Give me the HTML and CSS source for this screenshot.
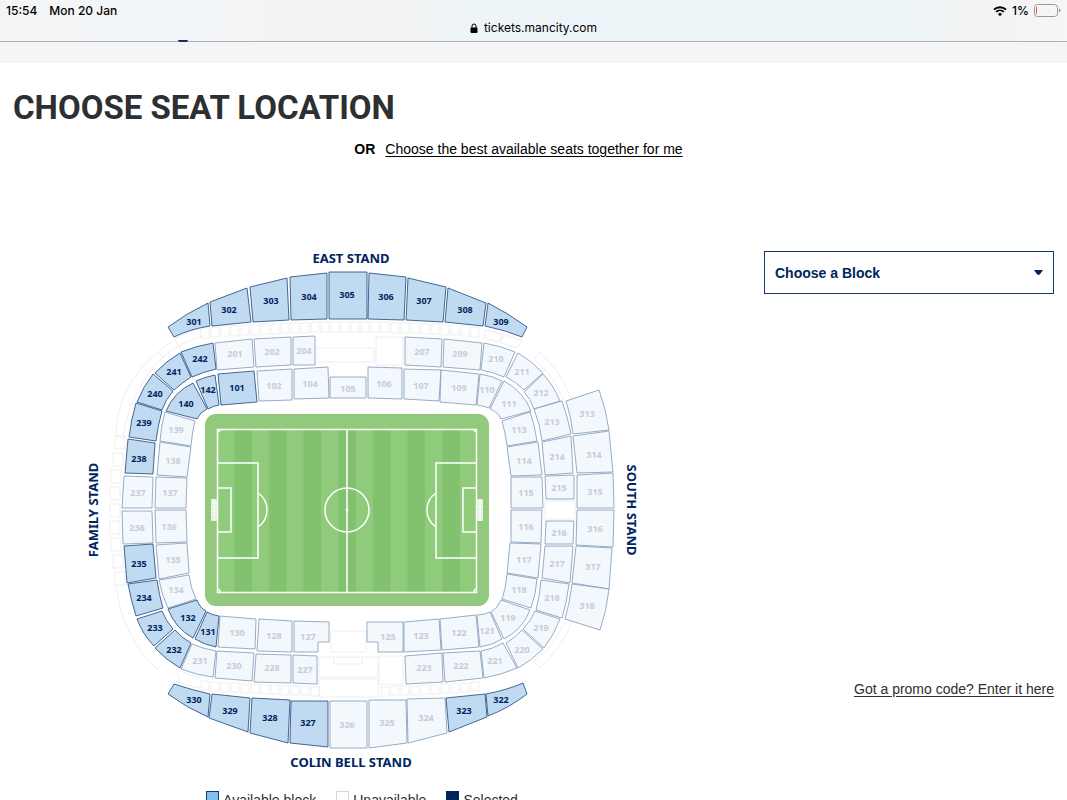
FILE: index.html
```html
<!DOCTYPE html>
<html lang="en">
<head>
    <meta charset="UTF-8">
    <meta name="viewport" content="width=device-width, initial-scale=1.0">
    <title>Choose Seat Location</title>
    <link rel="stylesheet" href="styles.css">
</head>
<body>
    <header class="browser-bar">
        <div class="status-row">
            <div class="clock"><span>15:54</span><span>Mon 20 Jan</span></div>
            <div class="device">
                <svg class="wifi" viewBox="0 0 15 12" aria-hidden="true">
                    <path d="M1 4.6a9.4 9.4 0 0 1 13 0M3.3 7a6.2 6.2 0 0 1 8.4 0"/>
                    <path class="wifi-dot" d="M7.5 11.6 5.2 9.2a3.3 3.3 0 0 1 4.6 0z"/>
                </svg>
                <span>1%</span>
                <svg class="battery" viewBox="0 0 27 13" aria-hidden="true">
                    <rect x="0.5" y="0.5" width="23" height="12" rx="3"/>
                    <path class="battery-tip" d="M25 4.5q1.5.5 1.5 2t-1.5 2z"/>
                    <path class="battery-level" d="M2.5 3v7"/>
                </svg>
            </div>
        </div>
        <div class="address">
            <svg class="lock" viewBox="0 0 8 10" aria-hidden="true">
                <rect x="0.5" y="4.5" width="7" height="5.5" rx="1"/>
                <path d="M2 5V3a2 2 0 0 1 4 0v2"/>
            </svg>
            <span>tickets.mancity.com</span>
        </div>
    </header>
    <div class="site-strip"></div>

    <main>
        <h1>CHOOSE SEAT LOCATION</h1>
        <p class="best-seats"><strong>OR</strong><a href="#best">Choose the best available seats together for me</a></p>

        <div class="picker">
            <section class="map-column">
                <svg class="stadium" viewBox="13 245 704 537" role="group" aria-label="Stadium map">
                    <text class="stand" x="351" y="263">EAST STAND</text>
                    <text class="stand" x="351" y="767">COLIN BELL STAND</text>
                    <text class="stand" transform="translate(98 510) rotate(-90)">FAMILY STAND</text>
                    <text class="stand" transform="translate(627 510) rotate(90)">SOUTH STAND</text>

                    <g id="concourse" class="concourse">
                        <path d="M200 328 Q178 334 158 352 L163 357 Q181 342 203 336 M176 341L181 350"/>
                        <path d="M158 352 Q116 387 116 436 L123 438 Q128 393 163 357"/>
                        <path d="M116 585 Q122 637 157 669 L162 664 M176 671L180 681 M176 681Q186 686 200 688M180 671L200 678"/>
                        <path d="M485 330L502 334 499 342 484 338zM504 334L522 341 517 348 501 343z"/>
                        <path d="M539 352 Q560 370 571 398M539 352L534 359Q553 374 564 401"/>
                        <path d="M572 621Q564 646 539 668L534 661Q555 645 565 621"/>
                        <path d="M317 348H374V362H317M376 337H403V365H376z"/>
                        <path d="M319 657H378V677H319zM319 679H378V697H319zM334 657V664H362V657M379 656H403V684H379zM331 631H366V652H331z"/>
                        <path d="M545 501H575V519H545z"/>
                    </g>

                    <rect class="grass-edge" x="205" y="414" width="284" height="192" rx="11"/>
                    <rect class="grass" x="217" y="429" width="260" height="163"/>
                    <g id="stripes" class="stripes"></g>
                    <g class="lines">
                        <rect x="217.5" y="429.5" width="259" height="163"/>
                        <path d="M347 429V592M217 463H258V558H217M217 488H231V532H217"/>
                        <path d="M477 463H436V558H477M477 488H463V532H477"/>
                        <path d="M258 493Q267 499 267 510T258 527M436 493Q427 499 427 510T436 527"/>
                        <path d="M217 432Q220 432 220 429M474 429Q474 432 477 432M217 589Q220 589 220 592M474 592Q474 589 477 589"/>
                        <circle cx="347" cy="510" r="22"/>
                        <circle class="spot" cx="347" cy="510" r="1.5"/>
                    </g>
                    <g class="goal">
                        <rect x="211" y="499" width="6" height="22"/>
                        <rect x="477" y="499" width="6" height="22"/>
                        <path d="M211 503H217M211 507H217M211 511H217M211 515H217M214 499V521M477 503H483M477 507H483M477 511H483M477 515H483M480 499V521"/>
                    </g>

                    <g id="blocks"></g>
                </svg>

                <ul class="legend">
                    <li><span class="swatch available"></span>Available block</li>
                    <li><span class="swatch"></span>Unavailable</li>
                    <li><span class="swatch selected"></span>Selected</li>
                </ul>
            </section>

            <aside class="side-column">
                <div class="block-select">
                    <select id="block" aria-label="Choose a Block">
                        <option>Choose a Block</option>
                    </select>
                    <svg class="caret" viewBox="0 0 9 5" aria-hidden="true"><path d="M0 0h9L6 4.2q-1.5 1.2-3 0z"/></svg>
                </div>
                <a class="promo" href="#promo">Got a promo code? Enter it here</a>
            </aside>
        </div>
    </main>

    <script src="script.js"></script>
</body>
</html>
```

FILE: styles.css
```css
* {
    box-sizing: border-box;
}

body {
    margin: 0;
    height: 100vh;
    overflow-x: hidden;
    background: #fff;
    color: #000;
    font-family: "Liberation Sans", Arial, sans-serif;
    font-size: 14px;
    scrollbar-width: none;
}

/* browser bar */
.browser-bar {
    height: 42px;
    padding: 3px 6px 0;
    background: linear-gradient(90deg, #f4f5f6 0%, #f2f6f9 16%, #f3f3f3 28%, #f3f3f3 37%, #edf5f8 46%, #edf5f8 84%, #f2f2f3 91%, #f6f6f6 100%);
    border-bottom: 1px solid #b0b2b4;
    font-family: Inter, sans-serif;
    font-size: 12px;
    line-height: 15px;
}

.status-row,
.clock,
.device,
.address {
    display: flex;
    align-items: center;
}

.status-row {
    justify-content: space-between;
    font-weight: 500;
}

.clock {
    gap: 12px;
}

.device {
    gap: 5px;
}

.wifi {
    width: 14px;
    height: 12px;
    fill: none;
    stroke: #000;
    stroke-width: 2;
}

.wifi-dot {
    fill: #000;
    stroke: none;
}

.battery {
    width: 27px;
    height: 13px;
    fill: none;
    stroke: #98999b;
}

.battery-tip {
    fill: #98999b;
    stroke: none;
}

.battery-level {
    stroke: #f0554f;
}

.address {
    justify-content: center;
    gap: 6px;
    padding-top: 2px;
}

.lock {
    width: 8px;
    height: 10px;
    stroke: #000;
}

.lock rect {
    stroke: none;
}

.lock path {
    fill: none;
}

.site-strip {
    position: relative;
    height: 21px;
    background: #f5f5f8;
}

/* bottom of the club badge, under the bar */
.site-strip::before {
    content: "";
    position: absolute;
    top: -2px;
    left: 178px;
    width: 10px;
    height: 2px;
    border-radius: 0 0 5px 5px;
    background: #1b2c5e;
}

/* page */
main {
    padding: 23px 13px 0;
}

h1 {
    margin: 0;
    color: #2e2f31;
    font-family: Roboto, sans-serif;
    font-size: 33px;
    font-weight: 700;
    line-height: 44px;
}

.best-seats {
    display: flex;
    justify-content: center;
    gap: 10px;
    margin: 11px 30px 88px 0;
    line-height: 16px;
}

a {
    color: #000;
    text-underline-offset: 2px;
}

.picker {
    display: flex;
    align-items: flex-start;
    gap: 47px;
}

.map-column {
    flex: 1;
    min-width: 0;
}

.side-column {
    display: flex;
    flex-direction: column;
    gap: 387px;
    width: 290px;
    padding-top: 6px;
}

.block-select {
    position: relative;
}

.block-select select {
    width: 100%;
    height: 43px;
    padding: 0 36px 0 10px;
    appearance: none;
    border: 1px solid #143a73;
    border-radius: 0;
    background: #fff;
    color: #00245d;
    font: bold 14px "Liberation Sans", Arial, sans-serif;
}

.caret {
    position: absolute;
    top: 19px;
    right: 11px;
    width: 9px;
    height: 5px;
    fill: #00245d;
    pointer-events: none;
}

.promo {
    align-self: flex-end;
    color: #2e2f31;
    line-height: 16px;
}

/* stadium map */
.stadium {
    display: block;
    width: 100%;
    height: auto;
}

.stand {
    fill: #00245d;
    font-family: "Noto Sans", sans-serif;
    font-size: 13px;
    font-weight: 700;
    text-anchor: middle;
}

.block path {
    fill: #f3f8fd;
    stroke: #7f98b6;
    stroke-width: 0.8;
    stroke-linejoin: round;
}

.block text {
    fill: #c6ccd8;
    font-family: "Open Sans", sans-serif;
    font-size: 9px;
    font-weight: 700;
    text-anchor: middle;
}

.block.available path {
    fill: #c0daf2;
    stroke: #1c4478;
}

.block.available text {
    fill: #00245d;
}

.concourse {
    fill: none;
    stroke: #e9eaec;
    stroke-width: 0.8;
}

.grass-edge {
    fill: #92c97d;
}

.grass {
    fill: #8fcb7a;
}

.stripes {
    fill: #82c16d;
}

.lines {
    fill: none;
    stroke: #fff;
    stroke-width: 1.5;
}

.lines .spot {
    fill: #fff;
    stroke: none;
}

.goal rect {
    fill: #e2f2dc;
}

.goal path {
    stroke: #fff;
    stroke-width: 0.8;
}

.legend {
    display: flex;
    justify-content: center;
    gap: 20px;
    margin: 9px 0 0;
    padding: 0 6px 0 0;
    list-style: none;
    color: #2e2f31;
    line-height: 18px;
}

.legend li {
    display: flex;
    align-items: flex-start;
    gap: 4px;
}

.swatch {
    width: 13px;
    height: 13px;
    border: 1px solid #d5d7db;
}

.swatch.available {
    border-color: #143a73;
    background: #82bfee;
}

.swatch.selected {
    border-color: #00245d;
    background: #00245d;
}
```

FILE: script.js
```js
const SVG_NS = 'http://www.w3.org/2000/svg';

// [block number, label x, label y, outline]
const availableBlocks = [
    [301, 194, 322, 'M168 327Q187 313 208 303L210 326Q190 329 174 337z'],
    [302, 229, 310, 'M210 302L247 288 251 322 212 326z'],
    [303, 271, 301, 'M250 287L287 278 289 320 253 322z'],
    [304, 309, 297, 'M290 277L327 273V319L291 320z'],
    [305, 347, 295, 'M329 272H367V319H329z'],
    [306, 386, 297, 'M369 273L406 277 404 320 368 319z'],
    [307, 424, 301, 'M408 278L446 287 443 322 406 320z'],
    [308, 465, 310, 'M448 288L486 303 483 326 445 322z'],
    [309, 501, 322, 'M488 303Q508 313 527 327L522 337Q505 330 485 326z'],
    [242, 200, 359, 'M181 352Q196 346 213 343L216 369Q203 372 192 377z'],
    [241, 174, 372, 'M155 373Q166 361 180 353L191 377Q182 383 174 390z'],
    [240, 155, 394, 'M137 402Q143 387 153 374L173 391Q166 399 162 410z'],
    [239, 144, 423, 'M136 403L162 411Q158 425 156 441L129 437Q131 420 136 403z'],
    [238, 139, 459, 'M128 439L155 443 153 474 125 473z'],
    [235, 139, 564, 'M124 546L153 544 156 578 127 583z'],
    [234, 144, 598, 'M128 584L157 580Q159 595 163 608L136 616Q131 600 128 584z'],
    [233, 155, 628, 'M137 619L162 611Q166 621 173 629L154 646Q143 635 137 619z'],
    [232, 174, 650, 'M155 648L175 630Q182 638 191 643L180 668Q166 660 155 648z'],
    [142, 208, 390, 'M196 381Q205 377 215 375L219 405Q213 406 208 409z'],
    [140, 186, 404, 'M166 411Q174 392 193 383L207 409Q200 412 197 419z'],
    [101, 237, 388, 'M218 374L254 371 257 402 221 405z'],
    [131, 208, 632, 'M207 612Q212 615 219 616L216 647Q205 645 195 639z'],
    [132, 188, 618, 'M168 609L197 600Q200 608 206 611L193 638Q175 628 168 609z'],
    [330, 194, 700, 'M174 684Q192 690 210 694L208 717Q187 708 168 694z'],
    [329, 230, 711, 'M212 694L250 698 248 732 209 718z'],
    [328, 270, 718, 'M252 698L290 700 288 743 250 733z'],
    [327, 308, 723, 'M291 701H328V747L290 743z'],
    [323, 464, 711, 'M446 698L485 694 487 717 449 732z'],
    [322, 501, 700, 'M486 694Q507 690 523 683L527 694Q509 708 488 716z']
];

const unavailableBlocks = [
    [201, 235, 354, 'M215 343L252 339 254 367 217 370z'],
    [202, 272, 352, 'M254 339L291 337V365L256 367z'],
    [204, 304, 351, 'M293 337L315 336V365H293z'],
    [207, 422, 352, 'M405 337L442 339 441 367 405 365z'],
    [209, 460, 354, 'M444 339L482 343 480 370 443 367z'],
    [210, 496, 359, 'M484 343Q501 346 515 352L504 377Q493 372 481 370z'],
    [211, 522, 372, 'M518 353Q532 361 543 373L524 390Q516 382 506 377z'],
    [212, 541, 393, 'M543 374Q554 386 560 401L534 409Q531 399 524 392z'],
    [213, 552, 422, 'M534 409L562 401Q568 418 571 434L542 441Q540 424 534 409z'],
    [214, 557, 457, 'M542 442L571 436 573 473 545 475z'],
    [215, 559, 488, 'M545 476L574 475V499H546z'],
    [216, 559, 533, 'M546 521H574L573 544H545z'],
    [217, 557, 564, 'M545 546H573L570 583 542 578z'],
    [218, 552, 598, 'M541 580L569 584Q567 602 562 618L536 610Q540 595 541 580z'],
    [219, 541, 628, 'M535 611L560 619Q554 635 544 648L523 629Q531 621 535 611z'],
    [220, 522, 650, 'M522 630L543 649Q531 661 518 668L506 643Q515 638 522 630z'],
    [221, 495, 661, 'M503 643L517 668Q501 675 484 678L481 651Q493 649 503 643z'],
    [222, 461, 666, 'M443 653L480 651 483 678 445 682z'],
    [223, 424, 668, 'M405 656L442 653 443 682 406 684z'],
    [227, 305, 670, 'M293 655L317 656V684L293 683z'],
    [228, 272, 668, 'M256 654L291 655V683L254 682z'],
    [230, 234, 666, 'M217 651L254 653 252 681 215 678z'],
    [231, 200, 661, 'M192 644Q204 649 216 651L213 677Q196 675 181 669z'],
    [236, 137, 528, 'M122 511H152L153 543 123 544z'],
    [237, 138, 493, 'M124 476L153 477 152 508H122z'],
    [102, 274, 386, 'M257 371L292 369V400L259 401z'],
    [104, 310, 384, 'M294 369L328 367 329 398 294 399z'],
    [105, 348, 389, 'M330 377H366V398H330z'],
    [106, 384, 384, 'M368 367L402 368V399L368 398z'],
    [107, 421, 386, 'M404 369L441 370 439 401 404 399z'],
    [109, 459, 388, 'M441 370L479 374 476 405 440 402z'],
    [110, 487, 390, 'M480 374Q493 376 502 381L489 408Q484 406 477 405z'],
    [111, 509, 404, 'M504 381Q523 391 531 411L501 419Q498 412 490 409z'],
    [113, 519, 430, 'M502 421L530 412Q535 426 537 441L507 446Q505 431 502 421z'],
    [114, 524, 461, 'M507 447L538 442 542 475 511 476z'],
    [115, 526, 493, 'M511 477H542L543 508H511z'],
    [116, 526, 527, 'M511 510H542L541 543 511 542z'],
    [117, 524, 560, 'M510 543L541 544 538 578 507 573z'],
    [118, 519, 590, 'M507 574L537 579Q536 594 531 608L502 599Q506 588 507 574z'],
    [119, 508, 618, 'M501 600L530 610Q523 629 504 639L491 612Q498 608 501 600z'],
    [121, 487, 631, 'M477 615Q484 615 490 612L502 639Q493 645 480 647z'],
    [122, 459, 633, 'M440 619L476 615 479 647 442 650z'],
    [123, 421, 636, 'M404 622L439 619 441 650 404 652z'],
    [125, 388, 637, 'M367 622H403V652H378V642H367z'],
    [127, 308, 637, 'M294 621L329 622V642H318V652H294z'],
    [128, 274, 636, 'M259 619L292 621V652L257 651z'],
    [130, 237, 633, 'M220 616L256 619 255 649 218 647z'],
    [134, 176, 590, 'M159 580L189 575Q191 589 196 599L168 608Q162 596 159 580z'],
    [135, 173, 560, 'M156 545L187 543 189 573 159 579z'],
    [136, 169, 527, 'M155 510H186L187 542 156 543z'],
    [137, 170, 493, 'M156 477L187 478 186 508H155z'],
    [138, 173, 461, 'M160 442L191 447 187 477 157 475z'],
    [139, 176, 430, 'M165 412L195 421Q192 433 191 446L160 441Q161 426 165 412z'],
    [313, 587, 414, 'M566 401L599 390Q606 409 609 430L573 434Q571 416 566 401z'],
    [314, 594, 455, 'M573 436L609 431 613 472 577 473z'],
    [315, 595, 492, 'M577 475L613 473 614 508H577z'],
    [316, 595, 529, 'M577 510H614L613 547 576 545z'],
    [317, 593, 567, 'M576 546L612 548 609 589 572 583z'],
    [318, 587, 606, 'M572 584L609 589Q607 610 600 630L565 619Q570 602 572 584z'],
    [324, 426, 718, 'M407 699L445 698 447 733 408 743z'],
    [325, 387, 723, 'M369 700H406L407 743 369 748z'],
    [326, 347, 725, 'M330 701H367V748H330z']
];

function svgEl(name, attrs, parent) {
    const el = document.createElementNS(SVG_NS, name);
    for (const key in attrs) {
        el.setAttribute(key, attrs[key]);
    }
    parent.appendChild(el);
    return el;
}

function drawBlock([number, x, y, outline], available) {
    const layer = document.getElementById('blocks');
    const block = available
        ? svgEl('a', { class: 'block available', href: '#block-' + number }, layer)
        : svgEl('g', { class: 'block' }, layer);
    svgEl('path', { d: outline }, block);
    svgEl('text', { x: x, y: y + 3 }, block).textContent = number;

    if (available) {
        const option = document.createElement('option');
        option.textContent = number;
        document.getElementById('block').appendChild(option);
    }
}

unavailableBlocks.forEach(block => drawBlock(block, false));
availableBlocks.forEach(block => drawBlock(block, true));

// Mown stripes on the pitch
const stripes = document.getElementById('stripes');
for (let i = 1; i < 15; i += 2) {
    svgEl('rect', { x: 217 + i * 17.33, y: 429, width: 17.33, height: 163 }, stripes);
}

// Executive boxes between the tiers
const concourse = document.getElementById('concourse');
for (let i = 0; i < 28; i++) {
    const x = 201 + i * 10;
    const bend = Math.round(Math.pow((x - 343) / 142, 2) * 6);
    svgEl('rect', { x: x, y: 322 + bend, width: 8, height: 10 }, concourse);
    if (x < 315 || x > 375) {
        svgEl('rect', { x: x, y: 687 - bend, width: 8, height: 9 }, concourse);
    }
}
for (let i = 0; i < 9; i++) {
    const y = 436 + i * 17;
    const bend = Math.round(Math.pow((y - 504) / 68, 2) * 5);
    svgEl('rect', { x: 110 + bend, y: y, width: 10, height: 13 }, concourse);
}
```
